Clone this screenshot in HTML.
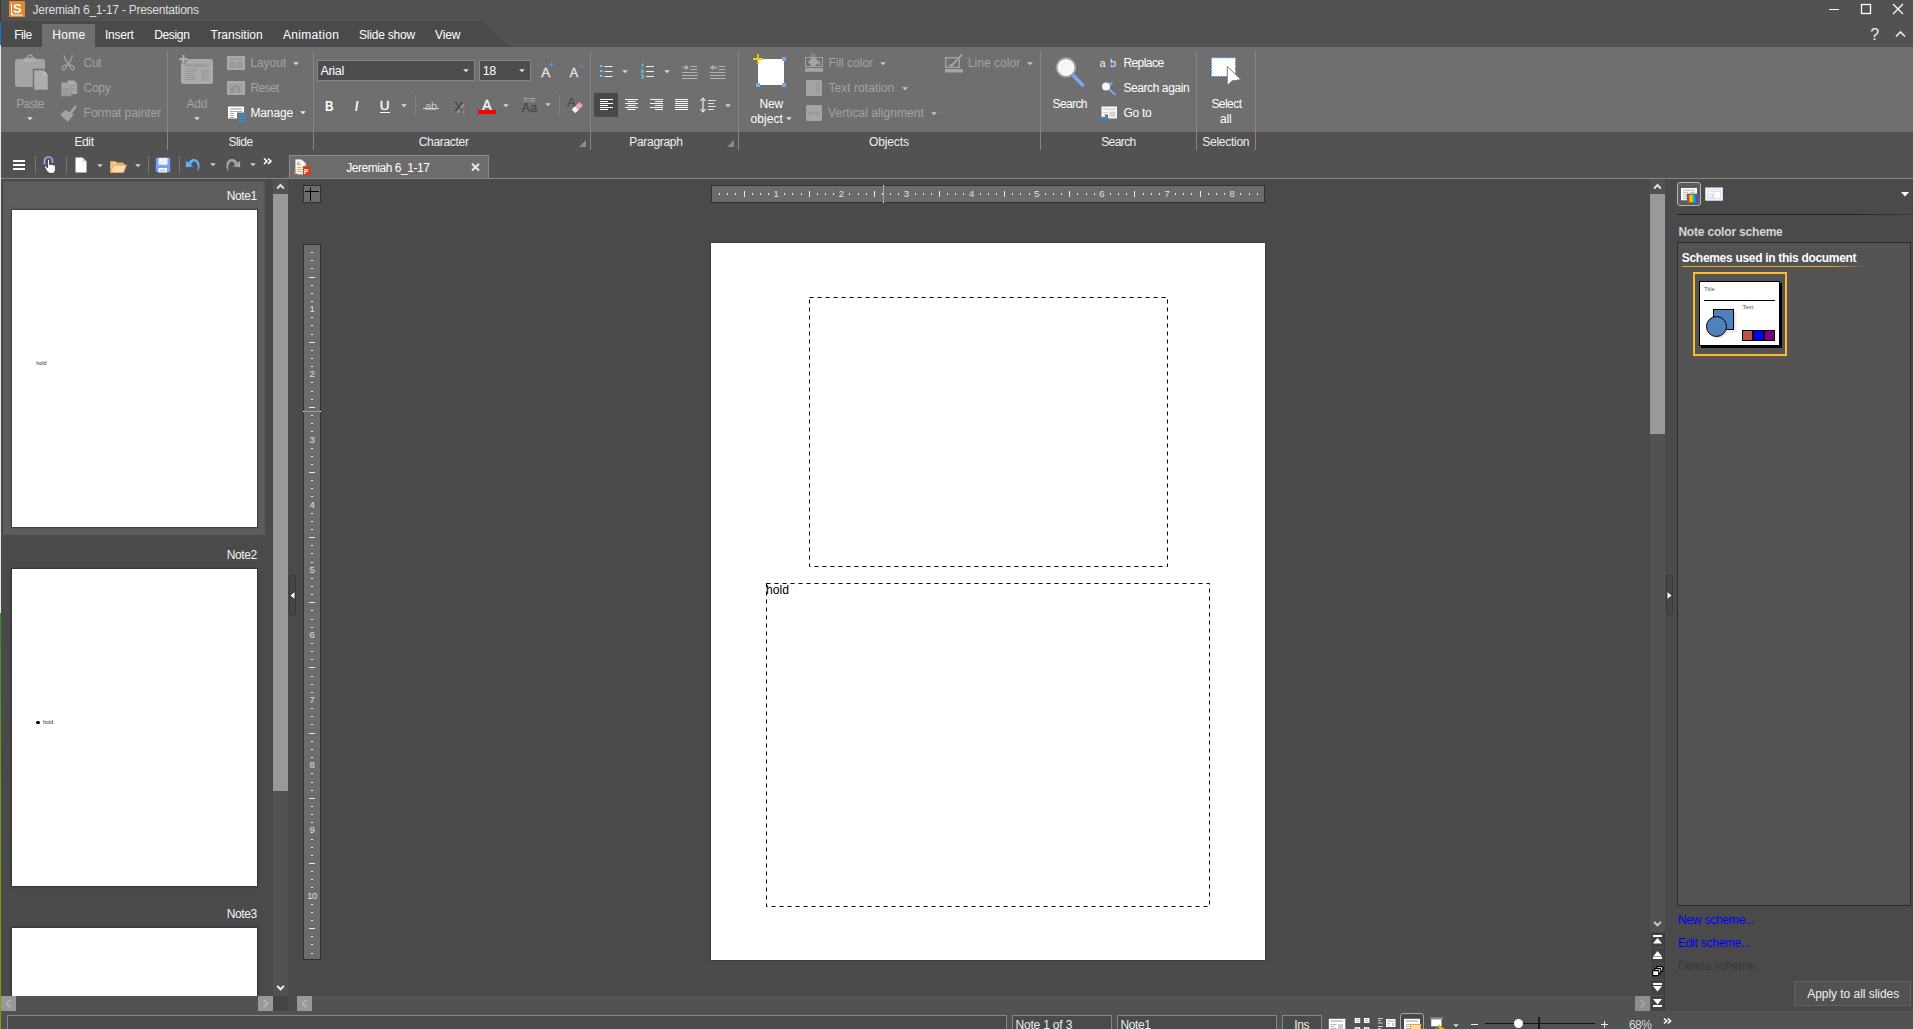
<!DOCTYPE html><html><head><meta charset="utf-8"><title>Jeremiah 6_1-17 - Presentations</title><style>
*{box-sizing:border-box;margin:0;padding:0}
html,body{width:1913px;height:1029px;overflow:hidden;background:#4a4a4a}
body{position:relative;font-family:"Liberation Sans",sans-serif;font-size:12px;color:#fff;line-height:1}
.a{position:absolute}
.t{position:absolute;white-space:nowrap;line-height:14px;height:14px}
.d{color:#a3a3a3}
.c{text-align:center}
.sep{position:absolute;width:1px;background:#858585}
svg{position:absolute;overflow:visible}
</style></head><body>
<div class="a" style="left:0px;top:0px;width:1px;height:22px;background:#3a3a3a;"></div>
<div class="a" style="left:0px;top:22px;width:1px;height:23px;background:#1d6fd0;"></div>
<div class="a" style="left:0px;top:45px;width:1px;height:568px;background:#e8e8e8;"></div>
<div class="a" style="left:0px;top:613px;width:1px;height:416px;background:linear-gradient(#3f8a3a,#6f9a20 40%,#8a9a10);"></div>
<div class="a" style="left:1px;top:0px;width:1912px;height:47px;background:#525252;"></div>
<svg style="left:1px;top:21px" width="512" height="26" viewBox="0 0 512 26"><path d="M0 0H482L509 26H0z" fill="#4a4a4a"/></svg>
<div class="a" style="left:1px;top:47px;width:1912px;height:85px;background:#6f6f6f;"></div>
<div class="a" style="left:1px;top:132px;width:1912px;height:46px;background:#525252;"></div>
<div class="a" style="left:1px;top:178px;width:1912px;height:1px;background:#848484;"></div>
<div class="a" style="left:1px;top:1011px;width:1912px;height:18px;background:#525252;"></div>
<div class="a" style="left:9px;top:1px;width:16px;height:16px;background:#e28a2b;"></div>
<svg style="left:9px;top:1px" width="16" height="16" viewBox="0 0 16 16"><path d="M2.5 2.5v11.5h11" fill="none" stroke="#fff" stroke-width="1"/><rect x="2" y="12" width="2" height="2" fill="#fff"/></svg>
<div class="t" style="left:13px;top:1px;font-size:13px;font-weight:700;color:#fff;line-height:15px">S</div>
<div class="t " style="left:32.60px;top:3px;font-size:12px;letter-spacing:-0.257px;color:#dedede">Jeremiah 6_1-17 - Presentations</div>
<svg style="left:1828px;top:3px" width="80" height="14" viewBox="0 0 80 14"><path d="M1 6.5h10" stroke="#fff" stroke-width="1" fill="none"/><rect x="33.5" y="1.5" width="9" height="9" fill="none" stroke="#fff" stroke-width="1.3"/><path d="M65 1l10 10M75 1l-10 10" stroke="#fff" stroke-width="1.3" fill="none"/></svg>
<div class="t" style="left:1870.3px;top:26px;font-size:16px;line-height:18px;height:18px;color:#f0f0f0">?</div>
<svg style="left:1895px;top:29.5px" width="11" height="8" viewBox="0 0 11 8"><path d="M1 6.5L5.5 2L10 6.5" stroke="#eee" stroke-width="1.6" fill="none"/></svg>
<div class="a" style="left:42px;top:24px;width:53px;height:23px;background:#6f6f6f;"></div>
<div class="t " style="left:14.20px;top:28px;font-size:12px;letter-spacing:-0.477px;">File</div>
<div class="t " style="left:52.20px;top:28px;font-size:12px;letter-spacing:0.361px;">Home</div>
<div class="t " style="left:105.00px;top:28px;font-size:12px;letter-spacing:-0.242px;">Insert</div>
<div class="t " style="left:154.20px;top:28px;font-size:12px;letter-spacing:-0.331px;">Design</div>
<div class="t " style="left:210.50px;top:28px;font-size:12px;letter-spacing:-0.005px;">Transition</div>
<div class="t " style="left:283.00px;top:28px;font-size:12px;letter-spacing:0.317px;">Animation</div>
<div class="t " style="left:359.00px;top:28px;font-size:12px;letter-spacing:-0.208px;">Slide show</div>
<div class="t " style="left:435.00px;top:28px;font-size:12px;letter-spacing:-0.141px;">View</div>
<div class="sep" style="left:167px;top:51px;height:99px"></div>
<div class="sep" style="left:313px;top:51px;height:99px"></div>
<div class="sep" style="left:590px;top:51px;height:99px"></div>
<div class="sep" style="left:738px;top:51px;height:99px"></div>
<div class="sep" style="left:1040px;top:51px;height:99px"></div>
<div class="sep" style="left:1196px;top:51px;height:99px"></div>
<div class="sep" style="left:1255px;top:51px;height:99px"></div>
<div class="t " style="left:74.40px;top:135px;font-size:12px;letter-spacing:-0.359px;color:#f0f0f0">Edit</div>
<div class="t " style="left:228.40px;top:135px;font-size:12px;letter-spacing:-0.497px;color:#f0f0f0">Slide</div>
<div class="t " style="left:418.70px;top:135px;font-size:12px;letter-spacing:-0.312px;color:#f0f0f0">Character</div>
<div class="t " style="left:629.30px;top:135px;font-size:12px;letter-spacing:-0.305px;color:#f0f0f0">Paragraph</div>
<div class="t " style="left:869.10px;top:135px;font-size:12px;letter-spacing:-0.147px;color:#f0f0f0">Objects</div>
<div class="t " style="left:1101.20px;top:135px;font-size:12px;letter-spacing:-0.600px;color:#f0f0f0">Search</div>
<div class="t " style="left:1202.30px;top:135px;font-size:12px;letter-spacing:-0.271px;color:#f0f0f0">Selection</div>
<svg style="left:579px;top:140px" width="7" height="7" viewBox="0 0 7 7"><path d="M7 0V7H0z" fill="#8c8c8c"/></svg>
<svg style="left:727px;top:140px" width="7" height="7" viewBox="0 0 7 7"><path d="M7 0V7H0z" fill="#8c8c8c"/></svg>
<svg style="left:15px;top:54px" width="34" height="37" viewBox="0 0 34 37"><rect x="0" y="5" width="30" height="28" rx="3" fill="#a4a4a4"/>
<circle cx="15" cy="3.800" r="2.600" fill="none" stroke="#a4a4a4" stroke-width="1.400"/>
<rect x="8" y="4" width="14" height="4.500" rx="2.200" fill="#adadad" stroke="#9a9a9a" stroke-width="0.600"/>
<path d="M18.500 15.500H28.500L33.500 20.500V36.500H18.500z" fill="#adadad" stroke="#6f6f6f" stroke-width="1.500"/><path d="M28.800 16.500V20.200H32.600z" fill="#c4c4c4"/></svg>
<div class="t d" style="left:16.20px;top:97px;font-size:12px;letter-spacing:-0.600px;">Paste</div>
<svg style="left:26.5px;top:117.0px" width="6" height="4" viewBox="0 0 6 4"><path d="M0.200 0.200h5.600L3 3.300z" fill="#dcdcdc"/></svg>
<svg style="left:61px;top:55px" width="15" height="16" viewBox="0 0 15 16"><path d="M3 0.500Q4 5 9.800 11L8.800 11.800Q3.500 6 3 0.500zM11.500 0.500Q10.500 5 4.700 11L5.700 11.800Q11 6 11.500 0.500z" fill="#a4a4a4" stroke="#a4a4a4" stroke-width="0.600"/>
<ellipse cx="3.300" cy="12.600" rx="1.700" ry="2.600" transform="rotate(35 3.300 12.600)" fill="none" stroke="#a4a4a4" stroke-width="1.200"/><ellipse cx="11.200" cy="12.600" rx="1.700" ry="2.600" transform="rotate(-35 11.200 12.600)" fill="none" stroke="#a4a4a4" stroke-width="1.200"/></svg>
<div class="t d" style="left:83.60px;top:56px;font-size:12px;letter-spacing:-0.286px;">Cut</div>
<svg style="left:61px;top:80px" width="17" height="17" viewBox="0 0 17 17"><path d="M6.500 0.500H13L16 3.500V14H6.500z" fill="#adadad" stroke="#8c8c8c" stroke-width="0.800"/><path d="M11 4.500h3.500M11 6.500h3.500M11 8.500h3.500M11 10.500h3.500" stroke="#8c8c8c" stroke-width="0.800"/>
<path d="M0.500 2.500H7L10 5.500V16H0.500z" fill="#a4a4a4" stroke="#8c8c8c" stroke-width="0.800"/><path d="M7 2.500V5.500H10" fill="#bdbdbd" stroke="#8c8c8c" stroke-width="0.600"/>
<path d="M2 8.500h6M2 10.500h6M2 12.500h6M2 14.500h6" stroke="#8a8a8a" stroke-width="0.800"/></svg>
<div class="t d" style="left:83.60px;top:81px;font-size:12px;letter-spacing:-0.303px;">Copy</div>
<svg style="left:60px;top:105px" width="18" height="18" viewBox="0 0 18 18"><path d="M15.300 1.800L11.500 7" stroke="#a4a4a4" stroke-width="2.600" stroke-linecap="round"/><path d="M5.500 5L13.800 9.500L7.600 17L0.300 9.500z" fill="#a4a4a4"/><path d="M2.500 11.500l4 4M4.300 9.800l4.200 4.200M6 8.200l4.300 4.200" stroke="#929292" stroke-width="0.700"/></svg>
<div class="t d" style="left:83.60px;top:106px;font-size:12px;letter-spacing:-0.048px;">Format painter</div>
<svg style="left:179px;top:55px" width="35" height="31" viewBox="0 0 35 31"><rect x="2" y="4" width="32" height="25" rx="2.500" fill="#ababab"/><path d="M4.500 0v8.500M0 4.200h8.500" stroke="#6f6f6f" stroke-width="4"/><path d="M4.500 0v8.500M0.200 4.200h8.500" stroke="#b6b6b6" stroke-width="2"/>
<rect x="6" y="8.500" width="24" height="3.500" fill="#9e9e9e"/><path d="M6 14.500h13M6 16.500h11M6 18.500h10M6 20.500h11M6 22.500h10M6 24.500h11" stroke="#999" stroke-width="1"/><rect x="22" y="14.500" width="8" height="11" fill="#a0a0a0"/></svg>
<div class="t d" style="left:186.50px;top:97px;font-size:12px;letter-spacing:-0.174px;">Add</div>
<svg style="left:193.5px;top:117.0px" width="6" height="4" viewBox="0 0 6 4"><path d="M0.200 0.200h5.600L3 3.300z" fill="#dcdcdc"/></svg>
<svg style="left:227px;top:56px" width="18" height="14" viewBox="0 0 18 14"><rect x="0" y="0" width="18" height="14" rx="1" fill="#a9a9a9"/><rect x="2.500" y="2" width="13" height="2" fill="#9c9c9c"/><rect x="2.500" y="5.500" width="6" height="6.500" fill="#9a9a9a"/><rect x="9.500" y="5.500" width="6" height="6.500" fill="#9a9a9a"/></svg>
<div class="t d" style="left:250.40px;top:56px;font-size:12px;letter-spacing:-0.065px;">Layout</div>
<svg style="left:292.5px;top:62.0px" width="6" height="4" viewBox="0 0 6 4"><path d="M0.200 0.200h5.600L3 3.300z" fill="#dcdcdc"/></svg>
<svg style="left:227px;top:81px" width="18" height="14" viewBox="0 0 18 14"><rect x="0" y="0" width="18" height="14" rx="1" fill="#a9a9a9"/><rect x="2.500" y="2" width="13" height="10" fill="#a0a0a0"/><path d="M5.500 8.500a3.300 3.300 0 1 1 5.500 2.500" fill="none" stroke="#8c8c8c" stroke-width="1.400"/><path d="M3 6.500l1.500 4l3-2.500z" fill="#8c8c8c"/><path d="M3 11.500h4" stroke="#909090" stroke-width="1"/></svg>
<div class="t d" style="left:250.40px;top:81px;font-size:12px;letter-spacing:-0.600px;">Reset</div>
<svg style="left:228px;top:106px" width="18" height="17" viewBox="0 0 18 17"><rect x="0" y="0.500" width="16" height="12" fill="#fff"/><rect x="2" y="2" width="12" height="1.800" fill="#c4c4c4"/><path d="M2 5.500h6M8.500 5.500h5.500M2 7.500h4M2 9.500h4M2 11.500h4" stroke="#a8a8a8" stroke-width="1"/>
<rect x="9" y="6.500" width="9" height="10.500" fill="#6f6f6f"/><path d="M10.500 8.900h7.500M10.500 12h7.500M10.500 15.100h7.500" stroke="#3a8ccc" stroke-width="1.900"/></svg>
<div class="t " style="left:250.40px;top:106px;font-size:12px;letter-spacing:-0.094px;">Manage</div>
<svg style="left:299.5px;top:111.0px" width="6" height="4" viewBox="0 0 6 4"><path d="M0.200 0.200h5.600L3 3.300z" fill="#ececec"/></svg>
<div class="a" style="left:317px;top:60px;width:158px;height:21px;background:#4d4d4d;border:1px solid #858585"></div>
<div class="t " style="left:320.40px;top:64px;font-size:12.5px;letter-spacing:-0.278px;">Arial</div>
<svg style="left:462.5px;top:69.0px" width="6" height="4" viewBox="0 0 6 4"><path d="M0.200 0.200h5.600L3 3.300z" fill="#e0e0e0"/></svg>
<div class="a" style="left:479px;top:60px;width:52px;height:21px;background:#4d4d4d;border:1px solid #858585"></div>
<div class="t " style="left:482.80px;top:64px;font-size:12.5px;letter-spacing:-0.600px;">18</div>
<svg style="left:518.5px;top:69.0px" width="6" height="4" viewBox="0 0 6 4"><path d="M0.200 0.200h5.600L3 3.300z" fill="#e0e0e0"/></svg>
<div class="t" style="left:541.3px;top:64.800px;font-size:13.500px;line-height:16px;height:16px;color:#e8e8e8;-webkit-text-stroke:0.300px #e8e8e8">A</div>
<svg style="left:549px;top:62px" width="5" height="5" viewBox="0 0 5 5"><path d="M2.500 0v5M0 2.500h5" stroke="#3f9be8" stroke-width="1"/></svg>
<div class="t" style="left:569.8px;top:66px;font-size:12.500px;line-height:14px;color:#e8e8e8;-webkit-text-stroke:0.300px #e8e8e8">A</div>
<svg style="left:577.5px;top:64.5px" width="6" height="2" viewBox="0 0 6 2"><path d="M0 1h5" stroke="#3f9be8" stroke-width="1"/></svg>
<div class="t" style="left:324.7px;top:98px;font-size:14px;font-weight:700;line-height:16px;height:16px;transform:scaleX(.84);transform-origin:0 0">B</div>
<div class="t" style="left:354.5px;top:98px;font-size:14px;font-style:italic;font-weight:700;line-height:16px;height:16px;transform:scaleX(.8);transform-origin:0 0">I</div>
<div class="t" style="left:379.7px;top:98px;font-size:13.500px;line-height:16px;height:16px;-webkit-text-stroke:0.300px #fff">U</div>
<div class="a" style="left:380px;top:111.7px;width:10px;height:1.3px;background:#fff;"></div>
<svg style="left:400.5px;top:104.0px" width="6" height="4" viewBox="0 0 6 4"><path d="M0.200 0.200h5.600L3 3.300z" fill="#d8d8d8"/></svg>
<div class="sep" style="left:415px;top:94px;height:22px;background:#808080"></div>
<div class="t" style="left:425px;top:99px;font-size:11px;line-height:14px;color:#c6c6c6;letter-spacing:-0.2px">ab</div>
<div class="a" style="left:423px;top:108px;width:16px;height:1px;background:#d0d0d0;"></div>
<div class="t" style="left:456.5px;top:101px;font-size:13px;line-height:16px;height:16px;color:#a8a8a8">X</div>
<div class="t" style="left:454.3px;top:98.500px;font-size:13.500px;line-height:16px;height:16px;color:#454545;-webkit-text-stroke:0.300px #454545">X</div>
<div class="t" style="left:482.200px;top:96.500px;font-size:14px;line-height:16px;height:16px;color:#fff;-webkit-text-stroke:0.300px #fff">A</div>
<div class="a" style="left:478px;top:110px;width:18px;height:4px;background:#ff0000;"></div>
<svg style="left:502.5px;top:104.0px" width="6" height="4" viewBox="0 0 6 4"><path d="M0.200 0.200h5.600L3 3.300z" fill="#d8d8d8"/></svg>
<div class="t" style="left:521.800px;top:101px;font-size:12.500px;line-height:14px;color:#474747;-webkit-text-stroke:0.250px #474747">Aa</div>
<svg style="left:523px;top:97px" width="13" height="6" viewBox="0 0 13 6"><path d="M1.500 1.500h11M0 4h11" stroke="#9e9e9e" stroke-width="1"/><path d="M2.800 0L0.800 1.500L2.800 3M9.500 2.500l2 1.500l-2 1.500" stroke="#9e9e9e" stroke-width="0.900" fill="none"/></svg>
<svg style="left:544.5px;top:103.0px" width="6" height="4" viewBox="0 0 6 4"><path d="M0.200 0.200h5.600L3 3.300z" fill="#cccccc"/></svg>
<div class="sep" style="left:559px;top:94px;height:22px;background:#808080"></div>
<div class="t" style="left:567px;top:96px;font-size:13px;line-height:14px;color:#484848;-webkit-text-stroke:0.200px #484848">A</div>
<svg style="left:571px;top:101px" width="13" height="13" viewBox="0 0 13 13"><path d="M8.500 1L11.800 4.500L4.300 12L0.800 8.500z" fill="#f5a3ad"/><path d="M4 5.500L7.500 9L4.300 12L0.800 8.500z" fill="#f2f2f2"/></svg>
<svg style="left:600px;top:65px" width="13" height="13" viewBox="0 0 13 13"><path d="M0 0.500h2.500M0 1.500h2.500M0 5.500h2.500M0 6.500h2.500M0 10.500h2.500M0 11.500h2.500" stroke="#6ec3f4" stroke-width="1"/><path d="M4.500 1.500h8M4.500 6.500h8M4.500 11.500h8" stroke="#f0f0f0" stroke-width="1.200"/></svg>
<svg style="left:621.5px;top:70.0px" width="6" height="4" viewBox="0 0 6 4"><path d="M0.200 0.200h5.600L3 3.300z" fill="#d8d8d8"/></svg>
<svg style="left:640px;top:63px" width="15" height="16" viewBox="0 0 15 16"><path d="M1.500 1.500l1.200-1v3.500M1 7h2.200v1.300H1.300v1.500h2.200M1 12h2.300v1.500h-1.300h1.300v1.700H1" stroke="#6ec3f4" stroke-width="1" fill="none"/><path d="M6 3.500h8M6 8.500h8M6 13.500h8" stroke="#f0f0f0" stroke-width="1.200"/></svg>
<svg style="left:663.5px;top:70.0px" width="6" height="4" viewBox="0 0 6 4"><path d="M0.200 0.200h5.600L3 3.300z" fill="#d8d8d8"/></svg>
<svg style="left:682px;top:64px" width="16" height="15" viewBox="0 0 16 15"><path d="M8.500 2.500h7M8.500 5.500h7M0 8.500h15.500M0 11.500h15.500M0 14.500h15.500" stroke="#b2b2b2" stroke-width="1"/><path d="M0.500 3.500h4" stroke="#b2b2b2" stroke-width="1.600"/><path d="M3.500 0.500l3.500 3l-3.500 3z" fill="#b2b2b2"/></svg>
<svg style="left:710px;top:64px" width="16" height="15" viewBox="0 0 16 15"><path d="M8.500 2.500h7M8.500 5.500h7M0 8.500h15.500M0 11.500h15.500M0 14.500h15.500" stroke="#b2b2b2" stroke-width="1"/><path d="M2.500 3.500h4.500" stroke="#b2b2b2" stroke-width="1.600"/><path d="M3.500 0.500l-3.500 3l3.500 3z" fill="#b2b2b2"/></svg>
<div class="a" style="left:594px;top:93px;width:24px;height:24px;background:#484848;"></div>
<svg style="left:600px;top:99px" width="13" height="12" viewBox="0 0 13 12"><path d="M0 0.500h13M0 2.500h8M0 4.500h13M0 6.500h8M0 8.500h13M0 10.500h8" stroke="#fff" stroke-width="1"/></svg>
<svg style="left:625px;top:99px" width="13" height="12" viewBox="0 0 13 12"><path d="M0 0.500h13M2.500 2.500h8M0 4.500h13M2.500 6.500h8M0 8.500h13M2.500 10.500h8" stroke="#f4f4f4" stroke-width="1"/></svg>
<svg style="left:650px;top:99px" width="13" height="12" viewBox="0 0 13 12"><path d="M0 0.500h13M5 2.500h8M0 4.500h13M5 6.500h8M0 8.500h13M5 10.500h8" stroke="#f4f4f4" stroke-width="1"/></svg>
<svg style="left:675px;top:99px" width="13" height="12" viewBox="0 0 13 12"><path d="M0 0.500h13M0 2.500h13M0 4.500h13M0 6.500h13M0 8.500h13M0 10.500h13" stroke="#f4f4f4" stroke-width="1"/></svg>
<svg style="left:700px;top:97px" width="17" height="16" viewBox="0 0 17 16"><path d="M3 1.500v13" stroke="#f0f0f0" stroke-width="1.200"/><path d="M0.500 4L3 1l2.500 3M0.500 12L3 15l2.500-3" stroke="#f0f0f0" stroke-width="1.100" fill="none"/><path d="M8 3.500h8M8 6.500h6M8 9.500h8M8 12.500h6" stroke="#e0e0e0" stroke-width="1"/></svg>
<svg style="left:724.5px;top:104.0px" width="6" height="4" viewBox="0 0 6 4"><path d="M0.200 0.200h5.600L3 3.300z" fill="#d8d8d8"/></svg>
<div class="a" style="left:758px;top:59px;width:26px;height:26px;background:#fff;border-radius:2px"></div>
<div class="a" style="left:782px;top:57px;width:4px;height:4px;background:#7ea6ee;"></div>
<div class="a" style="left:756px;top:83px;width:4px;height:4px;background:#7ea6ee;"></div>
<div class="a" style="left:782px;top:83px;width:4px;height:4px;background:#7ea6ee;"></div>
<svg style="left:753px;top:54px" width="10" height="10" viewBox="0 0 10 10"><path d="M5 0v10M0 5h10" stroke="#f6c915" stroke-width="1.800"/></svg>
<div class="t " style="left:759.50px;top:97px;font-size:12px;letter-spacing:-0.168px;">New</div>
<div class="t " style="left:750.60px;top:112px;font-size:12px;letter-spacing:0.057px;">object</div>
<svg style="left:785.5px;top:117.0px" width="6" height="4" viewBox="0 0 6 4"><path d="M0.200 0.200h5.600L3 3.300z" fill="#e0e0e0"/></svg>
<svg style="left:805px;top:54px" width="18" height="19" viewBox="0 0 18 19"><rect x="0.500" y="3.500" width="17" height="9" fill="none" stroke="#a4a4a4" stroke-width="1"/><path d="M3 8L8.500 2.500l6 5.500l-4.500 4h-3.500z" fill="#a4a4a4"/><path d="M6.500 4V1.800a1.600 1.600 0 0 1 3.200 0V4" stroke="#a4a4a4" stroke-width="1" fill="none"/><path d="M14.500 7q1.800 2.500 0 4.500q-1.800-2 0-4.500z" fill="#a4a4a4"/><rect x="0" y="14" width="18" height="3.800" fill="#a4a4a4"/></svg>
<div class="t d" style="left:828.40px;top:56px;font-size:12px;letter-spacing:0.003px;">Fill color</div>
<svg style="left:879.5px;top:62.0px" width="6" height="4" viewBox="0 0 6 4"><path d="M0.200 0.200h5.600L3 3.300z" fill="#c8c8c8"/></svg>
<svg style="left:806px;top:80px" width="16" height="16" viewBox="0 0 16 16"><rect x="0" y="0" width="16" height="16" rx="1" fill="#a4a4a4"/><path d="M10.500 2v12M13 2v12" stroke="#8d8d8d" stroke-width="0.800" stroke-dasharray="2 1"/></svg>
<div class="t d" style="left:828.40px;top:81px;font-size:12px;letter-spacing:0.061px;">Text rotation</div>
<svg style="left:901.5px;top:87.0px" width="6" height="4" viewBox="0 0 6 4"><path d="M0.200 0.200h5.600L3 3.300z" fill="#c8c8c8"/></svg>
<svg style="left:806px;top:105px" width="16" height="16" viewBox="0 0 16 16"><rect x="0" y="0" width="16" height="16" rx="1" fill="#a4a4a4"/><path d="M2.500 7.500h4.500M9 7.500h4.500M2.500 9.500h4.500M9 9.500h4.500" stroke="#8d8d8d" stroke-width="0.900"/></svg>
<div class="t d" style="left:828.10px;top:106px;font-size:12px;letter-spacing:0.064px;">Vertical alignment</div>
<svg style="left:930.5px;top:112.0px" width="6" height="4" viewBox="0 0 6 4"><path d="M0.200 0.200h5.600L3 3.300z" fill="#c8c8c8"/></svg>
<svg style="left:945px;top:53px" width="19" height="20" viewBox="0 0 19 20"><rect x="0.700" y="4.700" width="13.600" height="9.600" fill="none" stroke="#a4a4a4" stroke-width="1.400"/><path d="M6 11.500L16.500 0.500l1.500 1.500L8.500 12.500z" fill="#a4a4a4" stroke="#6f6f6f" stroke-width="0.500"/><path d="M4 13q1-2.500 3-2l1.500 1.500q-1.500 1.800-4.500 0.500z" fill="#a4a4a4"/><rect x="0" y="16" width="18" height="3.500" fill="#a4a4a4"/></svg>
<div class="t d" style="left:967.90px;top:56px;font-size:12px;letter-spacing:0.030px;">Line color</div>
<svg style="left:1026.5px;top:62.0px" width="6" height="4" viewBox="0 0 6 4"><path d="M0.200 0.200h5.600L3 3.300z" fill="#c8c8c8"/></svg>
<svg style="left:1054px;top:55px" width="32" height="34" viewBox="0 0 32 34"><path d="M17.500 18.500L28.500 30" stroke="#7ea6ee" stroke-width="3.600" stroke-linecap="round"/><circle cx="12" cy="12.500" r="9.500" fill="#f6f6f6" stroke="#9a9a9a" stroke-width="1.800"/></svg>
<div class="t " style="left:1052.50px;top:97px;font-size:12px;letter-spacing:-0.600px;">Search</div>
<div class="t" style="left:1099.5px;top:56px;font-size:11px;color:#f0f0f0;letter-spacing:4.5px">ab</div>
<svg style="left:1106.5px;top:60.5px" width="6" height="6" viewBox="0 0 6 6"><path d="M0 3h3.500" stroke="#3a8ed0" stroke-width="1.400"/><path d="M2.800 0.300l3 2.700l-3 2.700z" fill="#3a8ed0"/></svg>
<div class="t " style="left:1123.40px;top:56px;font-size:12px;letter-spacing:-0.555px;">Replace</div>
<svg style="left:1101px;top:81px" width="16" height="15" viewBox="0 0 16 15"><path d="M7 7l7 6.500" stroke="#7ea6ee" stroke-width="1.800" stroke-linecap="round"/><circle cx="5" cy="5.500" r="4" fill="#f6f6f6"/><path d="M7.500 1.500h4.500l-1.500 3.500z" fill="#7ea6ee"/></svg>
<div class="t " style="left:1123.40px;top:81px;font-size:12px;letter-spacing:-0.411px;">Search again</div>
<svg style="left:1100px;top:106px" width="18" height="16" viewBox="0 0 18 16"><rect x="1.500" y="0.500" width="15.500" height="12" fill="#fbfbfb"/><rect x="3" y="2.200" width="12.500" height="1.800" fill="#d8d8d8"/><rect x="9.500" y="5.500" width="6" height="5.500" fill="#d4d4d4"/><path d="M3 6.500h5" stroke="#ccc" stroke-width="1"/><path d="M4 8.500l4 0l0 4" fill="#6f6f6f"/><path d="M0 12h5.500" stroke="#3a86c4" stroke-width="2.200"/><path d="M5 8.500l4 3.500l-4 3.500z" fill="#3a86c4"/></svg>
<div class="t " style="left:1123.40px;top:106px;font-size:12px;letter-spacing:-0.238px;">Go to</div>
<svg style="left:1210px;top:56px" width="32" height="32" viewBox="0 0 32 32"><rect x="1.300" y="1.600" width="24.400" height="19" fill="#fff" stroke="#2e7cc4" stroke-width="1.200" stroke-dasharray="1.400 1.200"/><path d="M17.300 10.500V29.700L21.800 25L31 23.600z" fill="#fff" stroke="#6f6f6f" stroke-width="0.900"/></svg>
<div class="t " style="left:1211.40px;top:97px;font-size:12px;letter-spacing:-0.550px;">Select</div>
<div class="t " style="left:1220.10px;top:112px;font-size:12px;letter-spacing:-0.206px;">all</div>
<div class="a" style="left:13px;top:160px;width:12px;height:2px;background:#fff;"></div>
<div class="a" style="left:13px;top:164px;width:12px;height:2px;background:#fff;"></div>
<div class="a" style="left:13px;top:168px;width:12px;height:2px;background:#fff;"></div>
<div class="sep" style="left:35px;top:156px;height:18px;background:#757575"></div>
<div class="sep" style="left:66px;top:156px;height:18px;background:#757575"></div>
<div class="sep" style="left:148px;top:156px;height:18px;background:#757575"></div>
<div class="sep" style="left:179px;top:156px;height:18px;background:#757575"></div>
<svg style="left:43px;top:156px" width="14" height="18" viewBox="0 0 14 18"><path d="M1.500 8.500V5a4 4 0 0 1 8 0V7" fill="none" stroke="#8db4f6" stroke-width="1.700"/><path d="M4.600 4.300a0.950 0.950 0 0 1 1.900 0V8.800l0.900-0.600l1.100 0.500l0.900-0.200l1 0.600l1-0.100q1 0.500 1 1.600V13.500q0 3-2.300 3.800H6.500Q4.800 16.800 3.500 14.500L1.600 11.300q-0.300-1 0.700-1.300q0.800 0 1.300 0.800L4.600 12z" fill="#fff" stroke="#2a2a2a" stroke-width="0.700"/></svg>
<svg style="left:75px;top:157px" width="12" height="16" viewBox="0 0 12 16"><path d="M0.500 0.500H7.500L11.500 4.500V15.500H0.500z" fill="#fff"/><path d="M7.500 0.500V4.500H11.500z" fill="#cfcfcf"/></svg>
<svg style="left:96.5px;top:164.0px" width="6" height="4" viewBox="0 0 6 4"><path d="M0.200 0.200h5.600L3 3.300z" fill="#d0d0d0"/></svg>
<svg style="left:110px;top:160px" width="17" height="13" viewBox="0 0 17 13"><path d="M0.500 12V1.500H5.500L7 3H13.500V5" fill="#f3c488" stroke="#dfa45e" stroke-width="1"/><path d="M0.500 12.500L3.500 5H16.500L13.500 12.500z" fill="#fcdcab" stroke="#dfa45e" stroke-width="1"/></svg>
<svg style="left:134.5px;top:164.0px" width="6" height="4" viewBox="0 0 6 4"><path d="M0.200 0.200h5.600L3 3.300z" fill="#d0d0d0"/></svg>
<svg style="left:155px;top:157px" width="16" height="16" viewBox="0 0 16 16"><path d="M0.500 0.500H15.500V15.500H2L0.500 14z" fill="#7da0f2" stroke="#444" stroke-width="0.500"/><rect x="3.500" y="0.800" width="9" height="7" fill="#eef2fd"/><rect x="3.500" y="11" width="8.500" height="4.500" fill="#fafafa"/><rect x="5" y="12.500" width="5.500" height="2.200" fill="#cfcfcf"/></svg>
<svg style="left:185px;top:157px" width="16" height="16" viewBox="0 0 16 16"><path d="M3.500 6C5 1.500 11 0.500 13.500 4.500C15.500 8 14.500 12 12.600 14.600C13 11.500 13 8 11.500 5.800C10 3.500 7 4 6 8z" fill="#5fb2f0"/><path d="M0.900 3.700V10.200L8.200 9.500z" fill="#5fb2f0"/></svg>
<svg style="left:209.5px;top:163.0px" width="6" height="4" viewBox="0 0 6 4"><path d="M0.200 0.200h5.600L3 3.300z" fill="#d0d0d0"/></svg>
<svg style="left:225px;top:157px" width="16" height="16" viewBox="0 0 16 16"><g transform="translate(16,0) scale(-1,1)"><path d="M3.500 6C5 1.500 11 0.500 13.500 4.500C15.500 8 14.500 12 12.600 14.600C13 11.500 13 8 11.500 5.800C10 3.500 7 4 6 8z" fill="#a6a6a6"/><path d="M0.900 3.700V10.200L8.200 9.500z" fill="#a6a6a6"/></g></svg>
<svg style="left:249.5px;top:163.0px" width="6" height="4" viewBox="0 0 6 4"><path d="M0.200 0.200h5.600L3 3.300z" fill="#d0d0d0"/></svg>
<svg style="left:263px;top:158px" width="9" height="7" viewBox="0 0 9 7"><path d="M1 0.500L4 3.200L1 6M5 0.500L8 3.200L5 6" fill="none" stroke="#fff" stroke-width="1.600"/></svg>
<div class="a" style="left:289px;top:155px;width:200px;height:23px;background:#6c6c6c;border:1px solid #8a8a8a;border-bottom:none"></div>
<svg style="left:294px;top:158px" width="17" height="18" viewBox="0 0 17 18"><path d="M3.500 2.500H9L12 5.500V16.500H3.500z" fill="#e8e8e8"/><path d="M1.500 1.500H7L10.500 5V15.500H1.500z" fill="#fafafa" stroke="#c8c8c8" stroke-width="0.500"/><circle cx="4.800" cy="5.500" r="2" fill="#f0a868"/><path d="M4.800 5.500V3.500A2 2 0 0 1 6.800 5.500z" fill="#fff"/><path d="M3 9.500h5.500M3 11.500h5.500M3 13.500h5.500" stroke="#f0a868" stroke-width="1"/><rect x="0" y="13.500" width="2" height="2.500" fill="#f08a24"/><rect x="9" y="8" width="7.500" height="9.500" fill="#d3411c"/></svg>
<div class="t" style="left:304.3px;top:166.500px;font-size:7.5px;font-weight:700;line-height:9px;height:9px;color:#fff;transform:scaleX(.85);transform-origin:0 0">P</div>
<div class="t " style="left:346.30px;top:161px;font-size:12px;letter-spacing:-0.461px;">Jeremiah 6_1-17</div>
<svg style="left:471px;top:163px" width="10" height="9" viewBox="0 0 10 9"><path d="M1 0.800L8 7.500M8 0.800L1 7.500" stroke="#e6e6e6" stroke-width="2.200"/></svg>
<div class="a" style="left:3px;top:181px;width:262px;height:354px;background:#5e5e5e;box-shadow:inset 0 0 2px 0 rgba(74,74,74,.7)"></div>
<div class="a" style="left:12px;top:210px;width:245px;height:317px;background:#fff;box-shadow:0 0 0 1px rgba(40,40,40,.4),0 0 4px rgba(0,0,0,.3)"></div>
<div class="t " style="left:226.70px;top:189px;font-size:12px;letter-spacing:-0.404px;color:#f4f4f4">Note1</div>
<div class="a" style="left:12px;top:569px;width:245px;height:317px;background:#fff;box-shadow:0 0 0 1px rgba(40,40,40,.4),0 0 4px rgba(0,0,0,.3)"></div>
<div class="t " style="left:226.70px;top:548px;font-size:12px;letter-spacing:-0.404px;color:#f4f4f4">Note2</div>
<div class="a" style="left:12px;top:928px;width:245px;height:68px;background:#fff;box-shadow:0 0 0 1px rgba(40,40,40,.4),0 0 4px rgba(0,0,0,.3)"></div>
<div class="t " style="left:226.70px;top:907px;font-size:12px;letter-spacing:-0.404px;color:#f4f4f4">Note3</div>
<div class="t" style="left:36.3px;top:360px;font-size:5.4px;line-height:7px;height:7px;color:#333">hold</div>
<div class="a" style="left:36.4px;top:720.8px;width:3.2px;height:3.2px;background:#000;border-radius:50%"></div>
<div class="t" style="left:43px;top:719px;font-size:5.4px;line-height:7px;height:7px;color:#333">hold</div>
<div class="a" style="left:273px;top:179px;width:15px;height:817px;background:#525252;"></div>
<div class="a" style="left:273px;top:194px;width:15px;height:597px;background:#999;"></div>
<svg style="left:276px;top:183px" width="9" height="6" viewBox="0 0 9 6"><path d="M1.200 5.500L4.500 2L7.800 5.500" fill="none" stroke="#e0e0e0" stroke-width="1.900"/></svg>
<svg style="left:276px;top:985px" width="9" height="6" viewBox="0 0 9 6"><path d="M1.200 0.800L4.500 4.300L7.800 0.800" fill="none" stroke="#f4f4f4" stroke-width="1.900"/></svg>
<div class="a" style="left:1px;top:996px;width:287px;height:15px;background:#525252;"></div>
<div class="a" style="left:1px;top:996px;width:15px;height:15px;background:#999;"></div>
<svg style="left:5px;top:999px" width="7" height="9" viewBox="0 0 7 9"><path d="M5.500 0.800L1.500 4.500L5.500 8.200" fill="none" stroke="#b8b8b8" stroke-width="1.600"/></svg>
<div class="a" style="left:258px;top:996px;width:15px;height:15px;background:#999;"></div>
<svg style="left:262px;top:999px" width="7" height="9" viewBox="0 0 7 9"><path d="M1.500 0.800L5.500 4.500L1.500 8.200" fill="none" stroke="#b8b8b8" stroke-width="1.600"/></svg>
<div class="a" style="left:273px;top:996px;width:15px;height:15px;background:#444;"></div>
<div class="a" style="left:289px;top:575px;width:7px;height:40px;background:#444644;border:1px solid #383838;border-radius:2.5px"></div>
<svg style="left:290px;top:592px" width="5" height="7" viewBox="0 0 5 7"><path d="M4.500 0.300V6.700L0.500 3.500z" fill="#fff"/></svg>
<div class="a" style="left:303px;top:185px;width:18px;height:18px;background:#6c6c6c;border:1px solid #303030"></div>
<svg style="left:304px;top:186px" width="16" height="16" viewBox="0 0 16 16"><path d="M6.500 1.500V15M1 5.500H15" stroke="#000" stroke-width="1"/></svg>
<div class="a" style="left:711px;top:185px;width:554px;height:18px;background:#6c6c6c;border:1px solid #303030"></div>
<svg style="left:711px;top:185px" width="554" height="18" viewBox="0 0 554 18"><path d="M8.5 8V10M16.5 8V10M24.5 8V10M33.5 6V12M41.5 8V10M49.5 8V10M57.5 8V10M73.5 8V10M81.5 8V10M90.5 8V10M98.5 6V12M106.5 8V10M114.5 8V10M122.5 8V10M138.5 8V10M147.5 8V10M155.5 8V10M163.5 6V12M171.5 8V10M179.5 8V10M187.5 8V10M204.5 8V10M212.5 8V10M220.5 8V10M228.5 6V12M236.5 8V10M244.5 8V10M252.5 8V10M269.5 8V10M277.5 8V10M285.5 8V10M293.5 6V12M301.5 8V10M309.5 8V10M318.5 8V10M334.5 8V10M342.5 8V10M350.5 8V10M358.5 6V12M366.5 8V10M375.5 8V10M383.5 8V10M399.5 8V10M407.5 8V10M415.5 8V10M423.5 6V12M432.5 8V10M440.5 8V10M448.5 8V10M464.5 8V10M472.5 8V10M480.5 8V10M489.5 6V12M497.5 8V10M505.5 8V10M513.5 8V10M529.5 8V10M538.5 8V10M546.5 8V10" stroke="#ececec" stroke-width="1" fill="none"/></svg>
<div class="t c" style="left:766.2px;top:187px;width:20px;font-size:9.5px;line-height:14px;color:#e0e0e0">1</div>
<div class="t c" style="left:831.3px;top:187px;width:20px;font-size:9.5px;line-height:14px;color:#e0e0e0">2</div>
<div class="t c" style="left:896.5px;top:187px;width:20px;font-size:9.5px;line-height:14px;color:#e0e0e0">3</div>
<div class="t c" style="left:961.6px;top:187px;width:20px;font-size:9.5px;line-height:14px;color:#e0e0e0">4</div>
<div class="t c" style="left:1026.8px;top:187px;width:20px;font-size:9.5px;line-height:14px;color:#e0e0e0">5</div>
<div class="t c" style="left:1091.9px;top:187px;width:20px;font-size:9.5px;line-height:14px;color:#e0e0e0">6</div>
<div class="t c" style="left:1157.1px;top:187px;width:20px;font-size:9.5px;line-height:14px;color:#e0e0e0">7</div>
<div class="t c" style="left:1222.2px;top:187px;width:20px;font-size:9.5px;line-height:14px;color:#e0e0e0">8</div>
<div class="a" style="left:883px;top:185px;width:1px;height:18px;background:#a4a4a4;"></div>
<div class="a" style="left:883px;top:185px;width:1px;height:1px;background:#fff;"></div>
<div class="a" style="left:883px;top:202px;width:1px;height:1px;background:#fff;"></div>
<div class="a" style="left:303px;top:244px;width:18px;height:716px;background:#6c6c6c;border:1px solid #303030"></div>
<svg style="left:303px;top:244px" width="18" height="716" viewBox="0 0 18 716"><path d="M8 8.5H10M8 16.5H10M8 24.5H10M6 33.5H12M8 41.5H10M8 49.5H10M8 57.5H10M8 73.5H10M8 81.5H10M8 90.5H10M6 98.5H12M8 106.5H10M8 114.5H10M8 122.5H10M8 138.5H10M8 147.5H10M8 155.5H10M6 163.5H12M8 171.5H10M8 179.5H10M8 187.5H10M8 204.5H10M8 212.5H10M8 220.5H10M6 228.5H12M8 236.5H10M8 244.5H10M8 252.5H10M8 269.5H10M8 277.5H10M8 285.5H10M6 293.5H12M8 301.5H10M8 309.5H10M8 318.5H10M8 334.5H10M8 342.5H10M8 350.5H10M6 358.5H12M8 366.5H10M8 375.5H10M8 383.5H10M8 399.5H10M8 407.5H10M8 415.5H10M6 423.5H12M8 432.5H10M8 440.5H10M8 448.5H10M8 464.5H10M8 472.5H10M8 480.5H10M6 489.5H12M8 497.5H10M8 505.5H10M8 513.5H10M8 529.5H10M8 538.5H10M8 546.5H10M6 554.5H12M8 562.5H10M8 570.5H10M8 578.5H10M8 595.5H10M8 603.5H10M8 611.5H10M6 619.5H12M8 627.5H10M8 635.5H10M8 643.5H10M8 660.5H10M8 668.5H10M8 676.5H10M6 684.5H12M8 692.5H10M8 700.5H10M8 709.5H10" stroke="#ececec" stroke-width="1" fill="none"/></svg>
<div class="t c" style="left:302px;top:302.2px;width:20px;font-size:9.5px;line-height:14px;color:#e0e0e0;letter-spacing:-0.5px">1</div>
<div class="t c" style="left:302px;top:367.3px;width:20px;font-size:9.5px;line-height:14px;color:#e0e0e0;letter-spacing:-0.5px">2</div>
<div class="t c" style="left:302px;top:432.5px;width:20px;font-size:9.5px;line-height:14px;color:#e0e0e0;letter-spacing:-0.5px">3</div>
<div class="t c" style="left:302px;top:497.6px;width:20px;font-size:9.5px;line-height:14px;color:#e0e0e0;letter-spacing:-0.5px">4</div>
<div class="t c" style="left:302px;top:562.8px;width:20px;font-size:9.5px;line-height:14px;color:#e0e0e0;letter-spacing:-0.5px">5</div>
<div class="t c" style="left:302px;top:627.9px;width:20px;font-size:9.5px;line-height:14px;color:#e0e0e0;letter-spacing:-0.5px">6</div>
<div class="t c" style="left:302px;top:693.1px;width:20px;font-size:9.5px;line-height:14px;color:#e0e0e0;letter-spacing:-0.5px">7</div>
<div class="t c" style="left:302px;top:758.2px;width:20px;font-size:9.5px;line-height:14px;color:#e0e0e0;letter-spacing:-0.5px">8</div>
<div class="t c" style="left:302px;top:823.4px;width:20px;font-size:9.5px;line-height:14px;color:#e0e0e0;letter-spacing:-0.5px">9</div>
<div class="t c" style="left:302px;top:888.5px;width:20px;font-size:9.5px;line-height:14px;color:#e0e0e0;letter-spacing:-0.5px">10</div>
<div class="a" style="left:303px;top:411px;width:18px;height:1px;background:#9c9c9c;"></div>
<div class="a" style="left:303px;top:411px;width:1px;height:1px;background:#fff;"></div>
<div class="a" style="left:320px;top:411px;width:1px;height:1px;background:#fff;"></div>
<div class="a" style="left:711px;top:243px;width:554px;height:717px;background:#fff;box-shadow:0 0 0 1px rgba(50,50,50,.6)"></div>
<svg style="left:809px;top:297px" width="359" height="270" viewBox="0 0 359 270"><rect x="0.500" y="0.500" width="358" height="269" fill="none" stroke="#000" stroke-width="1" stroke-dasharray="4 4"/></svg>
<svg style="left:766px;top:583px" width="444" height="324" viewBox="0 0 444 324"><rect x="0.500" y="0.500" width="443" height="323" fill="none" stroke="#000" stroke-width="1" stroke-dasharray="4 4"/></svg>
<div class="t" style="left:766px;top:583px;font-size:12.2px;line-height:14px;color:#000">hold</div>
<div class="a" style="left:1650px;top:179px;width:15px;height:817px;background:#525252;"></div>
<div class="a" style="left:1650px;top:194px;width:15px;height:240px;background:#999;"></div>
<svg style="left:1653px;top:183px" width="9" height="6" viewBox="0 0 9 6"><path d="M1.200 5.500L4.500 2L7.800 5.500" fill="none" stroke="#e4e4e4" stroke-width="1.900"/></svg>
<svg style="left:1653px;top:921px" width="9" height="6" viewBox="0 0 9 6"><path d="M1.200 0.800L4.500 4.300L7.800 0.800" fill="none" stroke="#cfcfcf" stroke-width="1.900"/></svg>
<div class="a" style="left:1650px;top:931px;width:16px;height:80px;background:#525252;"></div>
<div class="a" style="left:1664px;top:931px;width:1px;height:80px;background:#363636;"></div>
<div class="a" style="left:1651px;top:932px;width:13px;height:15px;background:#424242;"></div>
<div class="a" style="left:1653px;top:935px;width:9px;height:2px;background:#fff;"></div>
<svg style="left:1653px;top:938px" width="9" height="6" viewBox="0 0 9 6"><path d="M0 5.500L4.500 0L9 5.500z" fill="#fff"/></svg>
<div class="a" style="left:1651px;top:948px;width:13px;height:15px;background:#424242;"></div>
<svg style="left:1653px;top:951px" width="9" height="6" viewBox="0 0 9 6"><path d="M0 5.500L4.500 0L9 5.500z" fill="#fff"/></svg>
<div class="a" style="left:1653px;top:957px;width:9px;height:2px;background:#fff;"></div>
<div class="a" style="left:1651px;top:964px;width:13px;height:15px;background:#424242;"></div>
<svg style="left:1652px;top:966px" width="12" height="11" viewBox="0 0 12 11"><rect x="4.600" y="0.600" width="6.200" height="4.800" rx="0.800" fill="#fff" stroke="#000" stroke-width="1.200"/><rect x="2.600" y="2.600" width="6.200" height="4.800" rx="0.800" fill="#fff" stroke="#000" stroke-width="1.200"/><rect x="0.600" y="4.600" width="6.200" height="5" rx="0.800" fill="#fff" stroke="#000" stroke-width="1.200"/></svg>
<div class="a" style="left:1651px;top:980px;width:13px;height:15px;background:#424242;"></div>
<div class="a" style="left:1653px;top:983px;width:9px;height:2px;background:#fff;"></div>
<svg style="left:1653px;top:985.5px" width="9" height="6" viewBox="0 0 9 6"><path d="M0 0L4.500 5.500L9 0z" fill="#fff"/></svg>
<div class="a" style="left:1651px;top:996px;width:13px;height:15px;background:#424242;"></div>
<svg style="left:1653px;top:999px" width="9" height="6" viewBox="0 0 9 6"><path d="M0 0L4.500 5.500L9 0z" fill="#fff"/></svg>
<div class="a" style="left:1653px;top:1005px;width:9px;height:2px;background:#fff;"></div>
<div class="a" style="left:297px;top:996px;width:1353px;height:15px;background:#525252;"></div>
<div class="a" style="left:297px;top:996px;width:15px;height:15px;background:#999;"></div>
<svg style="left:301px;top:999px" width="7" height="9" viewBox="0 0 7 9"><path d="M5.500 0.800L1.500 4.500L5.500 8.200" fill="none" stroke="#b8b8b8" stroke-width="1.600"/></svg>
<div class="a" style="left:1635px;top:996px;width:15px;height:15px;background:#8e8e8e;"></div>
<svg style="left:1639px;top:999px" width="7" height="9" viewBox="0 0 7 9"><path d="M1.500 0.800L5.500 4.500L1.500 8.200" fill="none" stroke="#a8a8a8" stroke-width="1.600"/></svg>
<div class="a" style="left:1666px;top:575px;width:7px;height:40px;background:#444644;border:1px solid #383838;border-radius:2.5px"></div>
<svg style="left:1667px;top:592px" width="5" height="7" viewBox="0 0 5 7"><path d="M0.500 0.300V6.700L4.500 3.500z" fill="#fff"/></svg>
<div class="a" style="left:1677px;top:182px;width:24px;height:24px;background:#5c5c5c;border:1px solid #b4b4b4;border-radius:3px"></div>
<svg style="left:1681px;top:188px" width="18" height="16" viewBox="0 0 18 16"><defs><linearGradient id="rb" x1="0" x2="1" y1="0" y2="0"><stop offset="0" stop-color="#ff1010"/><stop offset="0.200" stop-color="#ff9a00"/><stop offset="0.350" stop-color="#f4ea00"/><stop offset="0.550" stop-color="#30c838"/><stop offset="0.700" stop-color="#10b0e8"/><stop offset="0.850" stop-color="#3050ff"/><stop offset="1" stop-color="#8a20ff"/></linearGradient></defs><rect x="0" y="0" width="16" height="12.300" fill="#fff"/><rect x="2" y="1.500" width="12" height="1.800" fill="#cfcfcf"/><path d="M2 4.500h5M9 4.500h5M2 6.500h4M2 8.500h4M2 10.500h4" stroke="#c4c4c4" stroke-width="1"/><rect x="5.800" y="5.600" width="11.400" height="9.600" fill="#686868"/><rect x="7" y="6.800" width="9.200" height="7.400" fill="url(#rb)"/></svg>
<svg style="left:1705px;top:187px" width="18" height="14" viewBox="0 0 18 14"><rect x="0.300" y="0.500" width="17.500" height="13.200" fill="#fff"/><rect x="1.800" y="1.800" width="14.500" height="10.600" fill="#d4e0fb"/><path d="M3 3.500h12M3 5.500h6M3 7.500h4M3 9.500h4" stroke="#fff" stroke-width="1"/><rect x="9.500" y="5" width="5.500" height="6" fill="#fff"/></svg>
<svg style="left:1901px;top:192px" width="8" height="5" viewBox="0 0 8 5"><path d="M0 0h8L4 4.500z" fill="#fff"/></svg>
<div class="a" style="left:1677px;top:214px;width:236px;height:1px;background:linear-gradient(90deg,#222 75%,#3c3c3c);"></div>
<div class="t " style="left:1678.40px;top:225px;font-size:12px;letter-spacing:-0.185px;font-weight:700;color:#d6d6d6">Note color scheme</div>
<div class="a" style="left:1677px;top:242px;width:234px;height:664px;background:#535353;border:1px solid #2a2a2a"></div>
<div class="t " style="left:1681.80px;top:251px;font-size:12px;letter-spacing:-0.306px;font-weight:700;">Schemes used in this document</div>
<div class="a" style="left:1682px;top:266px;width:185px;height:1px;background:linear-gradient(90deg,#f0a21e 80%,rgba(240,162,30,0));"></div>
<div class="a" style="left:1693px;top:272px;width:94px;height:84px;background:transparent;border:2px solid #fdba2f"></div>
<div class="a" style="left:1701px;top:283px;width:81px;height:65px;background:#000;"></div>
<div class="a" style="left:1699px;top:281px;width:81px;height:65px;background:#fff;border:1px solid #000"></div>
<div class="t" style="left:1704px;top:286px;font-size:5.8px;line-height:7px;height:7px;color:#6a4a7a">Title</div>
<div class="a" style="left:1704px;top:300px;width:71px;height:1px;background:#000;"></div>
<div class="t" style="left:1742.5px;top:304px;font-size:5.8px;line-height:7px;height:7px;color:#7a3a4a">Text</div>
<svg style="left:1706px;top:308px" width="32" height="30" viewBox="0 0 32 30"><rect x="9.500" y="3.500" width="21" height="21" fill="#efeadc"/><circle cx="12.500" cy="20.500" r="10" fill="#efeadc"/><rect x="7.500" y="1.500" width="20" height="20" fill="#4f81bd" stroke="#000" stroke-width="1"/><circle cx="10.500" cy="18.500" r="10" fill="#4f81bd" stroke="#000" stroke-width="1"/></svg>
<svg style="left:1742px;top:330px" width="34" height="11" viewBox="0 0 34 11"><rect x="0" y="0" width="33" height="11" fill="#000"/><rect x="1" y="1" width="9" height="9" fill="#c0504d"/><rect x="12" y="1" width="9" height="9" fill="#0000ff"/><rect x="23" y="1" width="9" height="9" fill="#800080"/></svg>
<div class="t " style="left:1677.90px;top:913px;font-size:12px;letter-spacing:-0.213px;color:#0000ff">New scheme...</div>
<div class="t " style="left:1677.90px;top:936px;font-size:12px;letter-spacing:-0.241px;color:#0000ff">Edit scheme...</div>
<div class="t " style="left:1677.90px;top:959px;font-size:12px;letter-spacing:-0.237px;color:#393939">Delete scheme</div>
<div class="a" style="left:1794px;top:981px;width:117px;height:25px;background:#525252;border:1px solid #626262"></div>
<div class="t " style="left:1807.20px;top:987px;font-size:12px;letter-spacing:-0.040px;color:#f0f0f0">Apply to all slides</div>
<div class="a" style="left:7px;top:1015px;width:1000px;height:20px;background:#4a4a4a;border:1px solid #858585;border-bottom:none"></div>
<div class="a" style="left:1012px;top:1015px;width:100px;height:20px;background:#4a4a4a;border:1px solid #858585;border-bottom:none"></div>
<div class="a" style="left:1117px;top:1015px;width:160px;height:20px;background:#4a4a4a;border:1px solid #858585;border-bottom:none"></div>
<div class="a" style="left:1282px;top:1015px;width:40px;height:20px;background:#4a4a4a;border:1px solid #858585;border-bottom:none"></div>
<div class="t " style="left:1015.50px;top:1018px;font-size:12px;letter-spacing:-0.190px;color:#eee">Note 1 of 3</div>
<div class="t " style="left:1120.50px;top:1018px;font-size:12px;letter-spacing:-0.379px;color:#eee">Note1</div>
<div class="t " style="left:1294.20px;top:1018px;font-size:12px;letter-spacing:-0.354px;color:#eee">Ins</div>
<svg style="left:1328px;top:1018px" width="18" height="14" viewBox="0 0 18 14"><rect x="0.800" y="0.800" width="16.500" height="13" fill="#fff"/><rect x="2.500" y="2.200" width="12.500" height="1.800" fill="#c8c8c8"/><path d="M2.500 6.500h6M2.500 8.500h4M2.500 10.500h6" stroke="#b4b4b4" stroke-width="1"/><rect x="10" y="6" width="5" height="7" fill="#cdcdcd"/></svg>
<svg style="left:1354px;top:1018px" width="17" height="14" viewBox="0 0 17 14"><rect x="0.700" y="0" width="5.500" height="5" fill="#fff" /><rect x="9.900" y="0" width="5.500" height="5" fill="#fff"/><rect x="0.700" y="9.200" width="5.500" height="5" fill="#fff"/><rect x="9.900" y="9.200" width="5.500" height="5" fill="#fff"/><path d="M2 1.500h3M11.200 1.500h3M2 3.500h3M11.200 3.500h3M2 10.700h3M11.200 10.700h3" stroke="#aaa" stroke-width="0.900"/></svg>
<svg style="left:1378px;top:1018px" width="19" height="12" viewBox="0 0 19 12"><path d="M0 0.500h4.800M0 2.700h3M0 5h4.800M0 8.500h4.800M0 10.700h3" stroke="#dcdcdc" stroke-width="0.900"/><rect x="8" y="1" width="9.500" height="8" fill="#fff"/><rect x="9.300" y="2.300" width="7" height="1.500" fill="#c4c4c4"/><path d="M9.300 5.500h3M9.300 7.300h2" stroke="#bbb" stroke-width="0.900"/><rect x="14" y="5" width="2.300" height="3" fill="#cfcfcf"/></svg>
<div class="a" style="left:1400px;top:1013px;width:24px;height:22px;background:#484848;border:1px solid #a4a4a4;border-radius:3px"></div>
<svg style="left:1404px;top:1018px" width="18" height="14" viewBox="0 0 18 14"><rect x="0" y="0.800" width="16" height="13" fill="#fff"/><rect x="2" y="2.200" width="12" height="1.800" fill="#c8c8c8"/><path d="M2 6.500h4M2 8.500h3M2 10.500h4" stroke="#b4b4b4" stroke-width="1"/><rect x="6.400" y="6.400" width="10.400" height="8" fill="#fddaa2" stroke="#e9a23c" stroke-width="1"/></svg>
<svg style="left:1430px;top:1017px" width="17" height="13" viewBox="0 0 17 13"><rect x="0" y="0.300" width="13" height="1.700" fill="#8a8a8a"/><rect x="1.200" y="2.300" width="10.300" height="7" fill="#fff"/><rect x="5.800" y="9.300" width="1.400" height="3" fill="#8a8a8a"/><path d="M8.500 7.200V13L16 13z" fill="#f2a71c"/></svg>
<svg style="left:1452.5px;top:1024.0px" width="6" height="4" viewBox="0 0 6 4"><path d="M0.200 0.200h5.600L3 3.300z" fill="#d4d4d4"/></svg>
<div class="a" style="left:1471px;top:1024px;width:7px;height:1px;background:#ececec;"></div>
<div class="a" style="left:1485px;top:1023px;width:110px;height:1px;background:#151515;"></div>
<div class="a" style="left:1538px;top:1017px;width:2px;height:12px;background:#1a1a1a;"></div>
<div class="a" style="left:1514.3px;top:1019.4px;width:9px;height:9px;background:#fff;border-radius:50%"></div>
<div class="a" style="left:1601px;top:1024px;width:7px;height:1px;background:#ececec;"></div>
<div class="a" style="left:1604px;top:1021px;width:1px;height:7px;background:#ececec;"></div>
<div class="t " style="left:1629.00px;top:1018px;font-size:12px;letter-spacing:-0.600px;color:#d8d8d8">68%</div>
<svg style="left:1662.5px;top:1017.5px" width="9" height="7" viewBox="0 0 9 7"><path d="M1 0.500L3.800 3L1 5.500M4.800 0.500L7.600 3L4.800 5.500" fill="none" stroke="#fff" stroke-width="1.500"/></svg>
</body></html>
